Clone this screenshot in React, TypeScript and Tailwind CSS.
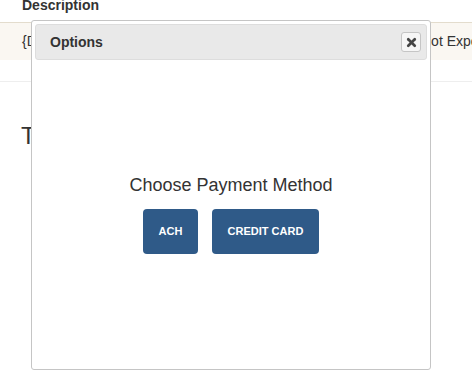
import { X } from "lucide-react";

export default function App() {
  return (
    <div className="relative h-[391px] w-[472px] overflow-hidden bg-white font-['Liberation_Sans',Arial,sans-serif] text-[#333]">
      {/* page behind the modal */}
      <div className="-mt-[8px]">
        <div className="h-[30px] px-[22px] pt-[3px] text-[14px] font-bold leading-[20px]">Description</div>
        <div className="flex h-[38px] items-center whitespace-nowrap border-t border-[#e3dccd] bg-[#faf7f2] text-[14px]">
          <span className="w-[421px] shrink-0 pl-[22px]">{"{Description}"}</span>
          <span>Not Exportable</span>
        </div>
        <div className="h-[22px] border-b border-[#eeeeee]" />
        <div className="pl-[21px] pt-[38px] text-[24px] leading-[32px]">Total</div>
      </div>

      {/* modal */}
      <div className="absolute left-[31px] top-[20px] flex h-[350px] w-[400px] flex-col rounded-[3px] border border-[#c5c5c5] bg-white p-[3px]">
        <div className="flex h-[36px] items-center justify-between rounded-[3px] border border-[#dddddd] bg-[#e9e9e9] pl-[14px] pr-[5px]">
          <span className="text-[14px] font-bold text-[#333]">Options</span>
          <button className="flex h-[20px] w-[20px] items-center justify-center rounded-[3px] border border-[#c5c5c5] bg-[#f6f6f6]">
            <X className="h-[13px] w-[13px] text-[#454545]" strokeWidth={5} />
          </button>
        </div>
        <div className="flex flex-col items-center pt-[114px]">
          <div className="text-[18px] leading-[22px] text-[#333]">Choose Payment Method</div>
          <div className="mt-[13px] flex gap-[14px]">
            <button className="h-[45px] w-[55px] rounded-[4px] bg-[#2f5a88] text-[11px] font-bold text-white">ACH</button>
            <button className="h-[45px] w-[107px] rounded-[4px] bg-[#2f5a88] text-[11px] font-bold text-white">CREDIT CARD</button>
          </div>
        </div>
      </div>
    </div>
  );
}
